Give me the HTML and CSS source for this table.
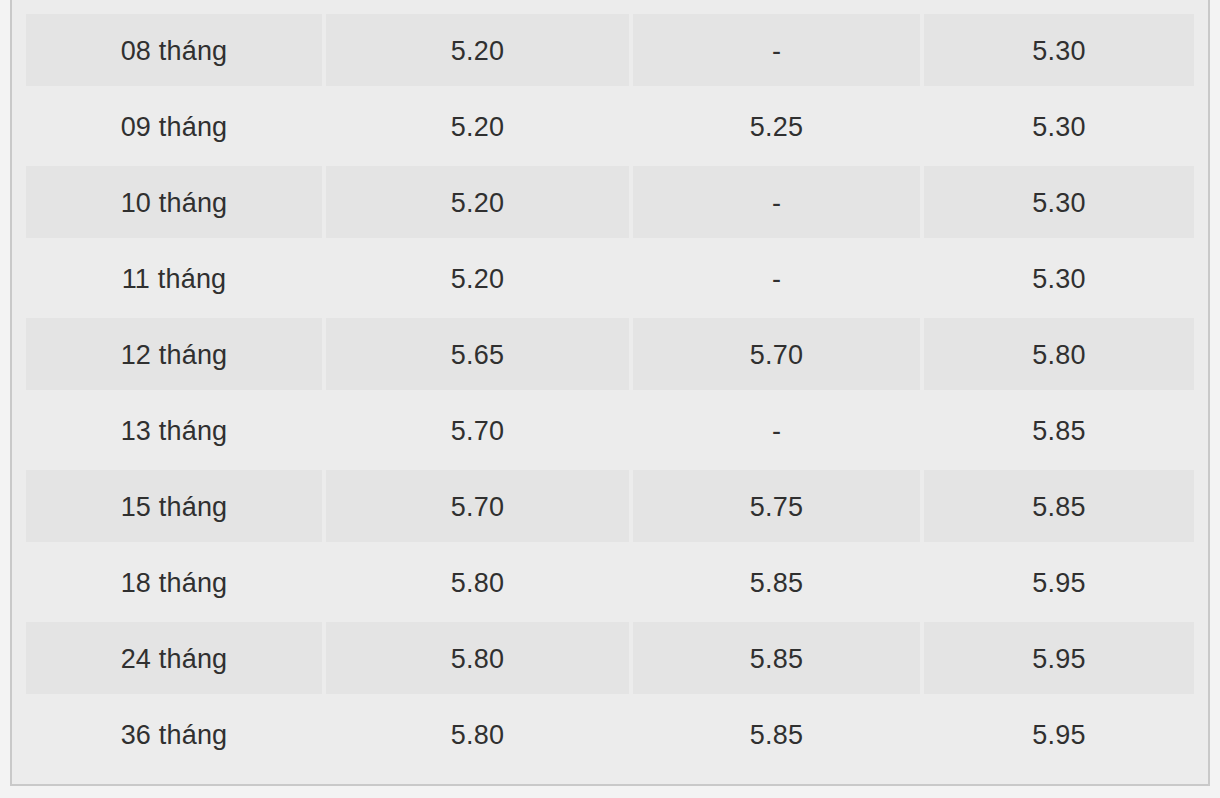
FILE: index.html
```html
<!DOCTYPE html>
<html lang="vi">
<head>
<meta charset="utf-8">
<title>Lãi suất</title>
<link rel="stylesheet" href="styles.css">
</head>
<body>
<div class="box">
  <table class="rates">
    <colgroup>
      <col class="c1"><col class="c2"><col class="c3"><col class="c4">
    </colgroup>
    <tbody>
      <tr><td>08 tháng</td><td>5.20</td><td>-</td><td>5.30</td></tr>
      <tr><td>09 tháng</td><td>5.20</td><td>5.25</td><td>5.30</td></tr>
      <tr><td>10 tháng</td><td>5.20</td><td>-</td><td>5.30</td></tr>
      <tr><td>11 tháng</td><td>5.20</td><td>-</td><td>5.30</td></tr>
      <tr><td>12 tháng</td><td>5.65</td><td>5.70</td><td>5.80</td></tr>
      <tr><td>13 tháng</td><td>5.70</td><td>-</td><td>5.85</td></tr>
      <tr><td>15 tháng</td><td>5.70</td><td>5.75</td><td>5.85</td></tr>
      <tr><td>18 tháng</td><td>5.80</td><td>5.85</td><td>5.95</td></tr>
      <tr><td>24 tháng</td><td>5.80</td><td>5.85</td><td>5.95</td></tr>
      <tr><td>36 tháng</td><td>5.80</td><td>5.85</td><td>5.95</td></tr>
    </tbody>
  </table>
</div>
</body>
</html>
```
FILE: styles.css
```css
html, body {
  margin: 0;
  padding: 0;
  background: #f3f3f3;
}
body {
  font-family: "Liberation Sans", Arial, Helvetica, sans-serif;
  color: #303030;
}
.box {
  margin: -2px 10px 0 10px;
  width: 1200px;
  box-sizing: border-box;
  border: 2px solid #c9c9c9;
  background: #ececec;
  padding: 10px;
}
.rates {
  width: 1176px;
  table-layout: fixed;
  border-collapse: separate;
  border-spacing: 4px;
}
.rates .c1 { width: 296px; }
.rates .c2 { width: 303px; }
.rates .c3 { width: 287px; }
.rates .c4 { width: 270px; }
.rates td {
  height: 72px;
  box-sizing: border-box;
  padding: 2px 0 0 0;
  text-align: center;
  vertical-align: middle;
  font-size: 27px;
  line-height: 30px;
  letter-spacing: 0.2px;
}
.rates tr:nth-child(odd) td {
  background: #e4e4e4;
}
```
